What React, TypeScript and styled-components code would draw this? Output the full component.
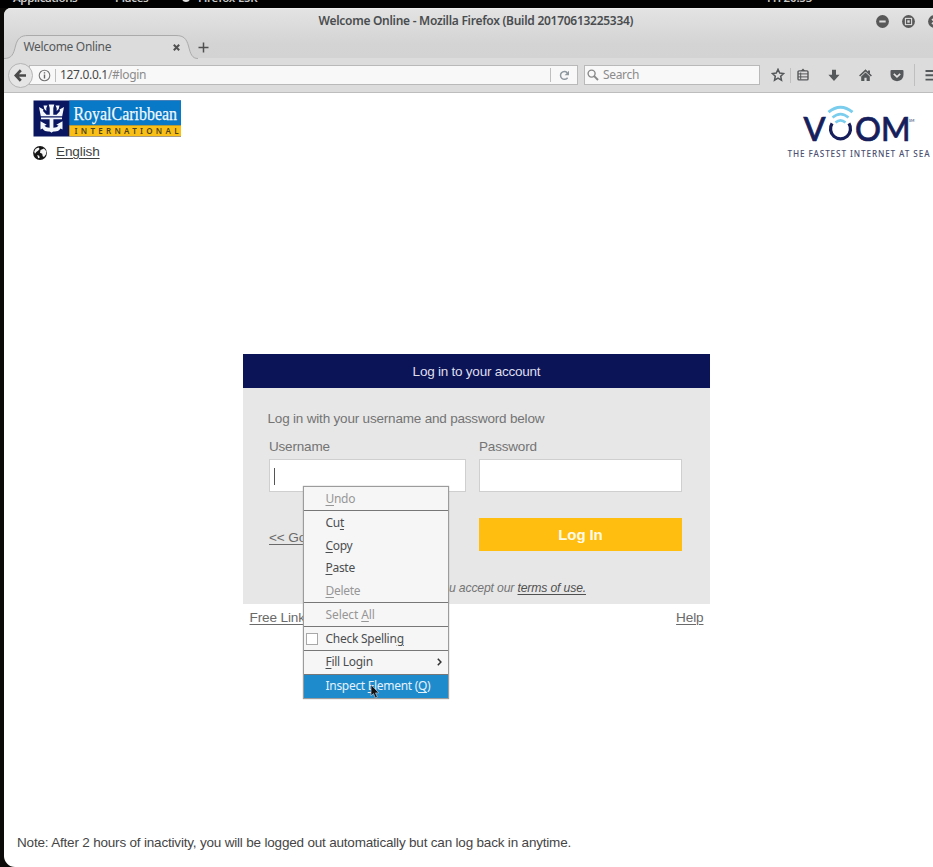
import React from "react";
import styled, { createGlobalStyle } from "styled-components";

const Global = createGlobalStyle`
  *, *::before, *::after { box-sizing: border-box; }
  html, body { margin: 0; padding: 0; overflow: hidden; background: #000; }
  svg { display: block; flex: none; }
`;

const uiFont = `"Noto Sans", "Open Sans", sans-serif`;
const pageFont = `"Liberation Sans", Arial, sans-serif`;

const Screen = styled.div`
  position: relative;
  width: 933px;
  height: 867px;
  overflow: hidden;
  background: #0b0a08;
  font-family: ${pageFont};
`;

/* Desktop panel, mostly scrolled off the top edge */
const DesktopBar = styled.div`
  display: flex;
  height: 8px;
  padding-left: 13px;
  overflow: hidden;
  background: #000;
`;

const DesktopItem = styled.span<{ $width: number; $spacing?: number }>`
  flex: none;
  width: ${(p) => p.$width}px;
  margin-top: -11.5px;
  font: 600 11.5px/18px ${uiFont};
  letter-spacing: ${(p) => p.$spacing ?? 0}px;
  color: #c8c8c8;
  white-space: nowrap;
`;

const DesktopDot = styled.span`
  flex: none;
  width: 8px;
  height: 8px;
  margin: -6px 8px 0 0;
  border-radius: 50%;
  background: #e2e2e2;
`;

const BrowserWindow = styled.div`
  display: flex;
  flex-direction: column;
  width: 944px;
  height: 859px;
  margin-left: 4px;
  overflow: hidden;
  border-radius: 7px 0 0 11px;
  background: #fff;
`;

const Chrome = styled.div`
  flex: none;
  height: 50px;
  background: linear-gradient(#e3e3e3, #d4d4d4 70%, #d3d3d3);
  border-top: 1px solid #ececec;
`;

const TitleRow = styled.div`
  display: grid;
  grid-template-columns: 872px 1fr;
  height: 26px;
`;

const Title = styled.div`
  padding-left: 314.5px;
  font: 600 12px/24px ${uiFont};
  letter-spacing: -0.28px;
  color: #4a4d4f;
  white-space: nowrap;
`;

const WindowButtons = styled.div`
  display: flex;
  gap: 13px;
  padding-top: 5.5px;
`;

const TabRow = styled.div`
  display: flex;
  height: 24px;
`;

const Tab = styled.div`
  position: relative;
  flex: none;
  width: 194px;
  height: 24px;
`;

const TabShape = styled.svg`
  position: absolute;
  inset: 0;
`;

const TabContent = styled.div`
  position: relative;
  display: flex;
  align-items: center;
  justify-content: space-between;
  height: 24px;
  padding: 0 18.5px 0 19.5px;
  font: 12px/24px ${uiFont};
  color: #55585a;
`;

const TabLabel = styled.span`
  letter-spacing: -0.32px;
`;

const TabRest = styled.div`
  flex: 1;
  padding: 7px 0 0 0;
  border-bottom: 1px solid #ababab;
`;

const Toolbar = styled.div`
  display: flex;
  flex: none;
  align-items: center;
  height: 35px;
  padding-left: 4px;
  background: #dcdcdc;
  border-bottom: 1.5px solid #bdbdbd;
`;

const BackButton = styled.div`
  display: grid;
  z-index: 1;
  flex: none;
  place-items: center;
  width: 25px;
  height: 25px;
  border: 1px solid #b4b4b4;
  border-radius: 50%;
  background: #e5e5e5;
`;

const Field = styled.div<{ $width: number; $overlap?: boolean }>`
  display: flex;
  flex: none;
  align-items: center;
  width: ${(p) => p.$width}px;
  height: 20px;
  margin-left: ${(p) => (p.$overlap ? -4 : 6)}px;
  padding-left: ${(p) => (p.$overlap ? 8 : 2)}px;
  border: 1px solid #b9b9b9;
  background: #f8f8f8;
  font: 12px/18px ${uiFont};
  color: #8b8b8b;
`;

const Divider = styled.span<{ $height: number; $inset?: number }>`
  flex: none;
  width: 1px;
  height: ${(p) => p.$height}px;
  margin-left: ${(p) => p.$inset ?? 0}px;
  background: #bfbfbf;
`;

const Address = styled.span`
  flex: 1;
  margin-left: 4.5px;
  letter-spacing: -0.33px;
`;

const Host = styled.span`
  color: #484848;
`;

const Reload = styled.span`
  display: grid;
  place-items: center;
  width: 26px;
`;

const SearchText = styled.span`
  margin-left: 4px;
  letter-spacing: -0.33px;
`;

const Tools = styled.div`
  display: flex;
  align-items: center;
  margin-left: 10.5px;
`;

const Tool = styled.span<{ $gap: number }>`
  display: block;
  margin-right: ${(p) => p.$gap}px;
`;

const Page = styled.div`
  display: flex;
  flex: 1;
  flex-direction: column;
`;

const PageHeader = styled.header`
  display: flex;
  justify-content: space-between;
  height: 261px;
  padding: 7px 16px 0 29px;
`;

const Language = styled.div`
  display: flex;
  align-items: center;
  gap: 9px;
  margin-top: 5px;
  height: 20px;
`;

const PageLink = styled.span<{ $dark?: boolean }>`
  font-size: 13.6px;
  letter-spacing: -0.14px;
  line-height: 18px;
  color: ${(p) => (p.$dark ? "#3f3f3f" : "#6a6a6a")};
  text-decoration: underline;
  text-decoration-thickness: 1px;
  text-underline-offset: 2px;
  white-space: nowrap;
`;

const Account = styled.section`
  width: 467px;
  margin-left: 239px;
`;

const AccountTitle = styled.div`
  height: 34.4px;
  background: #0b1457;
  color: #dfdfec;
  font-size: 13.5px;
  letter-spacing: -0.23px;
  line-height: 35px;
  text-align: center;
`;

const AccountBody = styled.div`
  height: 216px;
  padding: 21px 28px 0 26px;
  background: #e7e7e7;
  color: #747474;
  font-size: 13.5px;
  letter-spacing: -0.19px;
`;

const Intro = styled.div`
  height: 28px;
  margin-left: -1.5px;
  line-height: 19px;
`;

const Fields = styled.div`
  display: grid;
  grid-template-columns: 197px 203px;
  column-gap: 13px;
`;

const FieldLabel = styled.div`
  height: 22px;
  line-height: 19px;
`;

const Input = styled.div`
  height: 33px;
  padding: 8px 4px;
  border: 1px solid #cfcfcf;
  background: #fff;
`;

const Caret = styled.div`
  width: 1px;
  height: 17px;
  background: #555;
`;

const BackCell = styled.div`
  padding-top: 36.5px;
`;

const LoginButton = styled.div`
  height: 33px;
  margin-top: 26px;
  background: #ffbe10;
  color: #fffbe8;
  font-size: 15px;
  font-weight: 700;
  letter-spacing: -0.1px;
  line-height: 34px;
  text-align: center;
`;

const Terms = styled.div`
  margin: 27px 96px 0 0;
  font-size: 12.2px;
  letter-spacing: -0.15px;
  font-style: italic;
  line-height: 20px;
  text-align: right;
  white-space: nowrap;
`;

const TermsLink = styled.span`
  color: #505050;
  text-decoration: underline;
  text-underline-offset: 2px;
`;

const BelowLinks = styled.div`
  display: flex;
  justify-content: space-between;
  padding: 4.5px 6.5px 0;
`;

const Note = styled.footer`
  margin: auto 0 15px 13px;
  font-size: 13.5px;
  letter-spacing: -0.19px;
  line-height: 19px;
  color: #454545;
`;

/* Context menu floats above the page */
const Menu = styled.div`
  position: absolute;
  left: 302.5px;
  top: 486px;
  width: 146px;
  border: 1px solid #9c9c9c;
  background: #f6f6f6;
  box-shadow: 0 0 1px #999;
`;

const MenuGroup = styled.div`
  border-bottom: 1px solid #777;
  &:last-child { border-bottom: 0; }
`;

const MenuItem = styled.div<{
  $disabled?: boolean;
  $active?: boolean;
  $height?: number;
  $spacing?: number;
  $lift?: number;
}>`
  display: flex;
  align-items: center;
  height: ${(p) => p.$height ?? 23}px;
  padding: 0 6px ${(p) => p.$lift ?? 0}px 3px;
  background: ${(p) => (p.$active ? "#1e8bcd" : "transparent")};
  color: ${(p) => (p.$active ? "#e6f2fb" : p.$disabled ? "#969696" : "#4b4e50")};
  font: 12px/21px ${uiFont};
  letter-spacing: ${(p) => p.$spacing ?? -0.3}px;
  white-space: nowrap;
  u { text-decoration-thickness: 1px; text-underline-offset: 2px; }
`;

const MenuSlot = styled.span`
  flex: none;
  width: 19px;
`;

const MenuText = styled.span`
  flex: 1;
`;

const CheckBox = styled.span`
  display: block;
  width: 12px;
  height: 12px;
  margin-left: -1px;
  border: 1px solid #a8a8a8;
  background: #fff;
`;

const Pointer = styled.svg`
  position: absolute;
  left: 370px;
  top: 684px;
`;

const ink = "#55585a";

function WindowIcon({ kind }: { kind: "min" | "max" | "close" }) {
  return (
    <svg width="13" height="13" viewBox="0 0 13 13">
      <circle cx="6.5" cy="6.5" r="6.4" fill="#585858" />
      {kind === "min" && <path d="M3.3 6.5h6.4" stroke="#ddd" strokeWidth="1.8" />}
      {kind === "max" && (
        <>
          <rect x="3.4" y="3.4" width="6.2" height="6.2" fill="none" stroke="#ddd" strokeWidth="1.1" />
          <rect x="5.3" y="5.3" width="2.4" height="2.4" fill="#ddd" />
        </>
      )}
      {kind === "close" && <path d="M4 4l5 5M9 4l-5 5" stroke="#ddd" strokeWidth="1.7" />}
    </svg>
  );
}

function RoyalLogo() {
  return (
    <svg width="149" height="37" viewBox="0 0 149 37">
      <rect x="0.5" y="0.5" width="147.5" height="36" fill="#0a1660" />
      <rect x="36.3" y="0.5" width="111.7" height="25" fill="#0879c6" />
      <rect x="36.3" y="25.3" width="111.7" height="11" fill="#f9bf16" />
      <g fill="#f4f7fb">
        <path d="M6 7l4.500 2.500-.5 1.500 3.500 3.800h3.200V8l-1-3.500h5.600L20.300 8v6.800h3.200L27 11l-.5-1.500L31 7l-1.800 9.200H7.800z" />
        <path d="M10.500 5.500h4l-1.200 2.500v3l-2-2zM26.500 5.500h-4l1.200 2.500v3l2-2z" />
        <path d="M8 17.400h21v1.800H8z" />
        <path d="M16.600 18.500h3.800v9.300c2.200-.2 4-.8 5.200-2l-2.300-1 6.200-3.500v8.300l-2-1c-1.400 2.400-3.600 3-5.600 3-1.600 0-2.700.3-3.400 1.200-.7-.9-1.800-1.200-3.400-1.200-2 0-4.200-.6-5.600-3l-2 1v-8.300l6.200 3.500-2.300 1c1.200 1.200 3 1.800 5.200 2z" />
      </g>
      <text x="40.5" y="20" fontFamily="Liberation Serif, serif" fontSize="19.5" fill="#f2f8fd" stroke="#f2f8fd" strokeWidth=".25" textLength="103.5" lengthAdjust="spacingAndGlyphs">RoyalCaribbean</text>
      <text x="41.5" y="34" fontFamily="Noto Sans, sans-serif" fontWeight="600" fontSize="8" fill="#4b431f" textLength="104">INTERNATIONAL</text>
    </svg>
  );
}

function VoomLogo() {
  return (
    <svg width="146" height="60" viewBox="0 0 146 60">
      <g fill="none" stroke="#7bcdee" strokeWidth="2.6">
        <path d="M42.5 12.2Q54.500 2.200 66.500 12.200" strokeWidth="3" />
        <path d="M46.500 17.500Q54.500 10.600 62.500 17.500" />
        <path d="M49.500 22.500Q54.500 18.200 59.500 22.500" />
      </g>
      <path d="M46.100 23.400A10 10 0 1 0 62.900 23.400" fill="none" stroke="#161f5c" strokeWidth="3.300" />
      <g fontFamily="Lato, sans-serif" fontSize="32.500" fontWeight="500" fill="#161f5c" stroke="#161f5c" strokeWidth=".7">
        <text x="17.500" y="41" textLength="22" lengthAdjust="spacingAndGlyphs">V</text>
        <text x="69" y="41" textLength="26" lengthAdjust="spacingAndGlyphs">O</text>
        <text x="95" y="41" textLength="29.500" lengthAdjust="spacingAndGlyphs">M</text>
      </g>
      <text x="123" y="21.500" fontFamily="Lato, sans-serif" fontSize="3.600" fill="#161f5c">SM</text>
      <text x="1.500" y="56.500" fontFamily="Noto Sans, sans-serif" fontSize="8.200" fontWeight="500" fill="#4c5070" textLength="142">THE FASTEST INTERNET AT SEA</text>
    </svg>
  );
}

export default function App() {
  return (
    <Screen>
      <Global />
      <DesktopBar>
        <DesktopItem $width={102} $spacing={-0.4}>Applications</DesktopItem>
        <DesktopItem $width={67} $spacing={-0.3}>Places</DesktopItem>
        <DesktopDot />
        <DesktopItem $width={569} $spacing={-0.2}>Firefox ESR</DesktopItem>
        <DesktopItem $width={60} $spacing={-0.2}>Fri 20:53</DesktopItem>
      </DesktopBar>

      <BrowserWindow>
        <Chrome>
          <TitleRow>
            <Title>Welcome Online - Mozilla Firefox (Build 20170613225334)</Title>
            <WindowButtons>
              <WindowIcon kind="min" />
              <WindowIcon kind="max" />
              <WindowIcon kind="close" />
            </WindowButtons>
          </TitleRow>
          <TabRow>
            <Tab>
              <TabShape width="194" height="24" viewBox="0 0 194 24">
                <path d="M0 23.500C8 23.500 9.500 19 11.500 11C13.500 3 17 .5 24 .5H172C180 .5 182.500 4 184.500 11C186.500 19 188 23.500 194 23.500V24H0z" fill="#dcdcdc" />
                <path d="M0 23.500C8 23.500 9.500 19 11.500 11C13.500 3 17 .5 24 .5H172C180 .5 182.500 4 184.500 11C186.500 19 188 23.500 194 23.500" fill="none" stroke="#aaa" />
              </TabShape>
              <TabContent>
                <TabLabel>Welcome Online</TabLabel>
                <svg width="7" height="7" viewBox="0 0 7 7">
                  <path d="M.8.8l5.400 5.400M6.200.8L.8 6.200" stroke="#505050" strokeWidth="2" />
                </svg>
              </TabContent>
            </Tab>
            <TabRest>
              <svg width="11" height="11" viewBox="0 0 11 11">
                <path d="M5.500.5v10M.5 5.500h10" stroke="#505050" strokeWidth="1.500" />
              </svg>
            </TabRest>
          </TabRow>
        </Chrome>

        <Toolbar>
          <BackButton>
            <svg width="13" height="13" viewBox="0 0 13 13">
              <path d="M6.800 1.200L1.800 6.500l5 5.300M2.300 6.500H12" fill="none" stroke="#4b4b4b" strokeWidth="2.700" />
            </svg>
          </BackButton>
          <Field $width={549} $overlap>
            <svg width="13" height="13" viewBox="0 0 13 13">
              <circle cx="6.500" cy="6.500" r="5.300" fill="none" stroke="#777" strokeWidth="1.100" />
              <path d="M6.500 5.600v4M6.500 3.200v1.400" stroke="#666" strokeWidth="1.400" />
            </svg>
            <Divider $height={13} $inset={3.5} />
            <Address><Host>127.0.0.1</Host>/#login</Address>
            <Divider $height={14} />
            <Reload>
              <svg width="11" height="11" viewBox="0 0 11 11">
                <path d="M8.600 7.700A3.900 3.900 0 1 1 8.200 2.700" fill="none" stroke="#8e989f" strokeWidth="1.500" />
                <path d="M10 .8v4.400H5.600z" fill="#8e989f" />
              </svg>
            </Reload>
          </Field>
          <Field $width={176}>
            <svg width="12" height="12" viewBox="0 0 12 12">
              <circle cx="4.600" cy="4.600" r="3.500" fill="none" stroke="#888" strokeWidth="1.400" />
              <path d="M7.200 7.200l3.800 3.800" stroke="#888" strokeWidth="1.900" />
            </svg>
            <SearchText>Search</SearchText>
          </Field>
          <Tools>
            <Tool $gap={5}>
              <svg width="14" height="14" viewBox="0 0 14 14">
                <path d="M7 1.300l1.700 3.700 4 .5-3 2.700.8 4L7 10.200l-3.500 2 .8-4-3-2.700 4-.5z" fill="none" stroke={ink} strokeWidth="1.500" />
              </svg>
            </Tool>
            <Divider $height={15} />
            <Tool $gap={17.5}>
              <svg width="20" height="14" viewBox="0 0 20 14">
                <rect x="7" y="2.900" width="10" height="9" rx="1" fill="none" stroke={ink} strokeWidth="1.400" />
                <path d="M7 5.900h10M7 8.900h10M9.700 4.500v7" fill="none" stroke={ink} strokeWidth="1" />
                <path d="M9.700 3L12 .4 14.300 3z" fill={ink} />
              </svg>
            </Tool>
            <Tool $gap={19}>
              <svg width="12" height="13" viewBox="0 0 12 13">
                <path d="M4 .8h4v5h3.600L6 12 .4 5.800H4z" fill={ink} />
              </svg>
            </Tool>
            <Tool $gap={17.5}>
              <svg width="13" height="13" viewBox="0 0 13 13">
                <path d="M.6 7L6.500 1.300 12.400 7" fill="none" stroke={ink} strokeWidth="1.600" />
                <path d="M2.200 7.600L6.500 3.500l4.300 4.100V12H7.600V8.800H5.400V12H2.200zM9 1.600h2v3.500L9 3.200z" fill={ink} />
              </svg>
            </Tool>
            <Tool $gap={10}>
              <svg width="14" height="13" viewBox="0 0 14 13">
                <path d="M1.500 1h11q1 0 1 1v3.800q0 6-6.500 6.400Q.5 11.800.5 5.800V2q0-1 1-1z" fill={ink} />
                <path d="M3.800 4.800L7 7.900l3.200-3.100" fill="none" stroke="#e2e2e2" strokeWidth="1.700" />
              </svg>
            </Tool>
            <Divider $height={22} />
            <Tool $gap={0}>
              <svg width="24" height="13" viewBox="0 0 24 13">
                <path d="M10.500 2h12.500M10.500 6.300h12.500M10.500 10.600h12.500" stroke={ink} strokeWidth="1.900" />
              </svg>
            </Tool>
          </Tools>
        </Toolbar>

        <Page>
          <PageHeader>
            <div>
              <RoyalLogo />
              <Language>
                <svg width="14" height="16" viewBox="0 0 14 16">
                  <circle cx="7" cy="9" r="6.900" fill="#151515" />
                  <path d="M2.600 4.800l3-1.300 1 1.500-1.300 1.500-2 1.400-1.300 1.800-.8-2zM7.500 6l3.500-1.500 2.300 2.700-.3 3-2 2.800-1.300-.8-.5-2.500-2.200-1z" fill="#f5f5f5" />
                  <path d="M4.200 11l2 .8.500 2-1.500.4z" fill="#f5f5f5" />
                </svg>
                <PageLink $dark>English</PageLink>
              </Language>
            </div>
            <VoomLogo />
          </PageHeader>

          <Account>
            <AccountTitle>Log in to your account</AccountTitle>
            <AccountBody>
              <Intro>Log in with your username and password below</Intro>
              <Fields>
                <FieldLabel>Username</FieldLabel>
                <FieldLabel>Password</FieldLabel>
                <Input><Caret /></Input>
                <Input />
                <BackCell><PageLink>&lt;&lt; Go Back</PageLink></BackCell>
                <LoginButton>Log In</LoginButton>
              </Fields>
              <Terms>By logging in you accept our <TermsLink>terms of use.</TermsLink></Terms>
            </AccountBody>
            <BelowLinks>
              <PageLink>Free Links</PageLink>
              <PageLink>Help</PageLink>
            </BelowLinks>
          </Account>

          <Note>Note: After 2 hours of inactivity, you will be logged out automatically but can log back in anytime.</Note>
        </Page>
      </BrowserWindow>

      <Menu>
        <MenuGroup>
          <MenuItem $disabled><MenuSlot /><MenuText><u>U</u>ndo</MenuText></MenuItem>
        </MenuGroup>
        <MenuGroup>
          <MenuItem $height={22.75}><MenuSlot /><MenuText>Cu<u>t</u></MenuText></MenuItem>
          <MenuItem $height={22.75}><MenuSlot /><MenuText><u>C</u>opy</MenuText></MenuItem>
          <MenuItem $height={22.75}><MenuSlot /><MenuText><u>P</u>aste</MenuText></MenuItem>
          <MenuItem $height={22.75} $disabled><MenuSlot /><MenuText><u>D</u>elete</MenuText></MenuItem>
        </MenuGroup>
        <MenuGroup>
          <MenuItem $disabled $spacing={-0.1}><MenuSlot /><MenuText>Select <u>A</u>ll</MenuText></MenuItem>
        </MenuGroup>
        <MenuGroup>
          <MenuItem $spacing={-0.26}><MenuSlot><CheckBox /></MenuSlot><MenuText>Check Spellin<u>g</u></MenuText></MenuItem>
        </MenuGroup>
        <MenuGroup>
          <MenuItem $spacing={-0.28} $lift={2}>
            <MenuSlot />
            <MenuText><u>F</u>ill Login</MenuText>
            <svg width="5" height="8" viewBox="0 0 5 8">
              <path d="M.8.8L3.900 4 .8 7.200" fill="none" stroke="#333" strokeWidth="1.500" />
            </svg>
          </MenuItem>
        </MenuGroup>
        <MenuGroup>
          <MenuItem $active $lift={2}><MenuSlot /><MenuText>Inspect <u>E</u>lement (<u>Q</u>)</MenuText></MenuItem>
        </MenuGroup>
      </Menu>

      <Pointer width="10" height="15" viewBox="0 0 10 15">
        <path d="M1 .8v11l2.500-2.200 1.800 4.300 2.100-.9-1.900-4.100h3.300z" fill="#111" stroke="#b9c6d0" strokeWidth=".7" />
      </Pointer>
    </Screen>
  );
}
